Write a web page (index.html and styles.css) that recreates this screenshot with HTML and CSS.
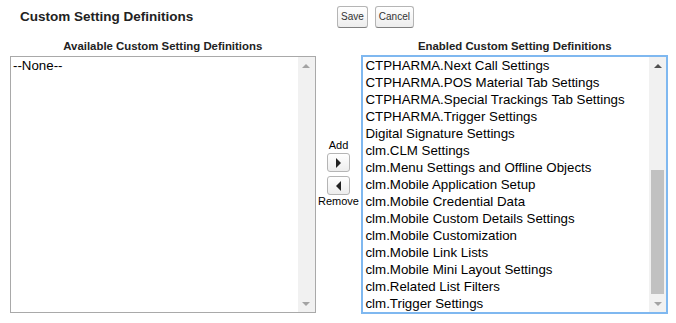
FILE: index.html
```html
<!DOCTYPE html>
<html lang="en">

<head>
  <meta charset="UTF-8">
  <title>Custom Setting Definitions</title>
  <link rel="stylesheet" href="styles.css">
</head>

<body>
  <div class="page-header">
    <h2 class="page-title">Custom Setting Definitions</h2>
    <div class="page-buttons">
      <button class="btn">Save</button>
      <button class="btn">Cancel</button>
    </div>
  </div>

  <div class="picker">
    <div class="picker-col">
      <div class="picker-label">Available Custom Setting Definitions</div>
      <div class="listbox">
        <div class="list-items">
          <div class="list-item">--None--</div>
        </div>
        <div class="scrollbar disabled">
          <span class="arrow-up"></span>
          <span class="track"></span>
          <span class="arrow-down"></span>
        </div>
      </div>
    </div>

    <div class="picker-middle">
      <span class="move-label">Add</span>
      <button class="move-btn"><span class="tri-right"></span></button>
      <button class="move-btn"><span class="tri-left"></span></button>
      <span class="move-label">Remove</span>
    </div>

    <div class="picker-col">
      <div class="picker-label">Enabled Custom Setting Definitions</div>
      <div class="listbox focused">
        <div class="list-items">
          <div class="list-item">CTPHARMA.Next Call Settings</div>
          <div class="list-item">CTPHARMA.POS Material Tab Settings</div>
          <div class="list-item">CTPHARMA.Special Trackings Tab Settings</div>
          <div class="list-item">CTPHARMA.Trigger Settings</div>
          <div class="list-item">Digital Signature Settings</div>
          <div class="list-item">clm.CLM Settings</div>
          <div class="list-item">clm.Menu Settings and Offline Objects</div>
          <div class="list-item">clm.Mobile Application Setup</div>
          <div class="list-item">clm.Mobile Credential Data</div>
          <div class="list-item">clm.Mobile Custom Details Settings</div>
          <div class="list-item">clm.Mobile Customization</div>
          <div class="list-item">clm.Mobile Link Lists</div>
          <div class="list-item">clm.Mobile Mini Layout Settings</div>
          <div class="list-item">clm.Related List Filters</div>
          <div class="list-item">clm.Trigger Settings</div>
        </div>
        <div class="scrollbar">
          <span class="arrow-up"></span>
          <span class="track"><span class="thumb"></span></span>
          <span class="arrow-down"></span>
        </div>
      </div>
    </div>
  </div>
</body>

</html>
```

FILE: styles.css
```css
body {
  margin: 0;
  padding: 0 8px 0 10px;
  font-family: "Liberation Sans", Arial, sans-serif;
  color: #000;
  background: #fff;
}

.page-header {
  display: flex;
  align-items: center;
  height: 33px;
}

.page-title {
  margin: 0;
  padding-left: 10px;
  width: 317px;
  font-size: 13.5px;
  font-weight: bold;
  color: #222;
}

.page-buttons {
  display: flex;
  gap: 7px;
}

.btn {
  font-family: "Liberation Sans", Arial, sans-serif;
  font-size: 10px;
  color: #333;
  background: linear-gradient(#fff, #ededed);
  border: 1px solid #b5b5b5;
  border-bottom-color: #7f7f7f;
  border-radius: 3px;
  padding: 4px 3px;
  height: 22px;
  cursor: pointer;
}

.picker {
  display: flex;
  margin-top: 4px;
}

.picker-col {
  display: flex;
  flex-direction: column;
}

.picker-col:first-child {
  width: 306px;
}

.picker-col:last-child {
  width: 307px;
}

.picker-label {
  text-align: center;
  font-size: 11.4px;
  font-weight: bold;
  color: #222;
  height: 19px;
  line-height: 19px;
}

.listbox {
  display: flex;
  height: 257px;
  border: 1px solid #a9a9a9;
  box-sizing: border-box;
  background: #fff;
}

.listbox.focused {
  border: 2px solid #7fb8f0;
  height: 259px;
  margin-top: -1px;
}

.list-items {
  flex: 1;
  overflow: hidden;
}

.list-item {
  font-size: 13.3px;
  height: 17px;
  line-height: 17px;
  padding-left: 2px;
  white-space: nowrap;
}

.scrollbar {
  width: 17px;
  background: #f1f1f1;
  display: flex;
  flex-direction: column;
  align-items: center;
}

.arrow-up,
.arrow-down {
  height: 17px;
  width: 17px;
  display: flex;
  align-items: center;
  justify-content: center;
}

.arrow-up::after {
  content: "";
  border-left: 4px solid transparent;
  border-right: 4px solid transparent;
  border-bottom: 4px solid #505050;
}

.arrow-down::after {
  content: "";
  border-left: 4px solid transparent;
  border-right: 4px solid transparent;
  border-top: 4px solid #a3a3a3;
}

.scrollbar.disabled .arrow-up::after {
  border-bottom-color: #a3a3a3;
}

.track {
  flex: 1;
  width: 100%;
  display: flex;
  flex-direction: column;
  justify-content: flex-end;
  align-items: center;
}

.thumb {
  width: 13px;
  height: 124px;
  margin-bottom: 1px;
  background: #c1c1c1;
}

.picker-middle {
  width: 46px;
  display: flex;
  flex-direction: column;
  align-items: center;
  padding-top: 102px;
  font-size: 11px;
}

.move-label {
  line-height: 13px;
  height: 13px;
}

.move-btn {
  width: 23px;
  height: 19px;
  margin: 1px 0 4px;
  padding: 0;
  border: 1px solid #b5b5b5;
  border-radius: 3px;
  background: linear-gradient(#fff, #ededed);
  display: flex;
  align-items: center;
  justify-content: center;
}

.move-btn + .move-btn {
  margin: 0;
}

.tri-right {
  border-top: 5px solid transparent;
  border-bottom: 5px solid transparent;
  border-left: 5px solid #222;
}

.tri-left {
  border-top: 5px solid transparent;
  border-bottom: 5px solid transparent;
  border-right: 5px solid #222;
}
```
